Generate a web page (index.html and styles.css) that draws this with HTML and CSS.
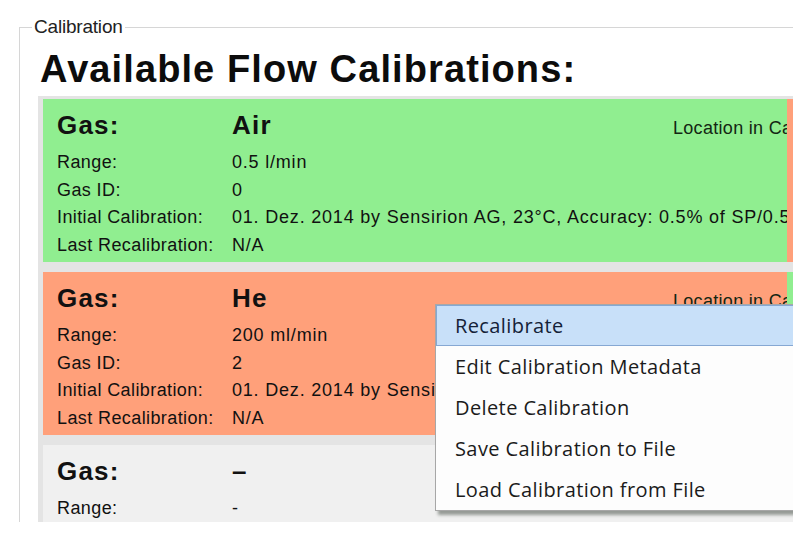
FILE: index.html
```html
<!DOCTYPE html>
<html>
<head>
<meta charset="utf-8">
<link rel="stylesheet" href="styles.css">
</head>
<body>
<div class="viewport">
  <fieldset class="group">
    <legend class="legend">Calibration</legend>
    <div class="content">
      <h1 class="title">Available Flow Calibrations:</h1>
      <div class="panel">
        <div class="row">
          <div class="card green">
            <div class="grid">
              <div class="hd">Gas:</div><div class="hd">Air</div><div class="loc">Location in Calibration Memory: 0</div>
              <div class="lb">Range:</div><div class="vl">0.5 l/min</div>
              <div class="lb">Gas ID:</div><div class="vl">0</div>
              <div class="lb">Initial Calibration:</div><div class="vl">01. Dez. 2014 by Sensirion AG, 23°C, Accuracy: 0.5% of SP/0.5% of FS</div>
              <div class="lb">Last Recalibration:</div><div class="vl">N/A</div>
            </div>
          </div>
          <div class="card salmon"></div>
        </div>
        <div class="row">
          <div class="card salmon">
            <div class="grid">
              <div class="hd">Gas:</div><div class="hd">He</div><div class="loc">Location in Calibration Memory: 1</div>
              <div class="lb">Range:</div><div class="vl">200 ml/min</div>
              <div class="lb">Gas ID:</div><div class="vl">2</div>
              <div class="lb">Initial Calibration:</div><div class="vl">01. Dez. 2014 by Sensirion AG, 23°C, Accuracy: 0.5% of SP/0.5% of FS</div>
              <div class="lb">Last Recalibration:</div><div class="vl">N/A</div>
            </div>
          </div>
          <div class="card green"></div>
        </div>
        <div class="row">
          <div class="card gray">
            <div class="grid">
              <div class="hd">Gas:</div><div class="hd">–</div><div class="loc">Location in Calibration Memory: 2</div>
              <div class="lb">Range:</div><div class="vl">-</div>
              <div class="lb">Gas ID:</div><div class="vl">-</div>
              <div class="lb">Initial Calibration:</div><div class="vl">-</div>
              <div class="lb">Last Recalibration:</div><div class="vl">-</div>
            </div>
          </div>
          <div class="card gray"></div>
        </div>
      </div>
    </div>
  </fieldset>
  <ul class="menu">
    <li class="item active">Recalibrate</li>
    <li class="item">Edit Calibration Metadata</li>
    <li class="item">Delete Calibration</li>
    <li class="item">Save Calibration to File</li>
    <li class="item">Load Calibration from File</li>
  </ul>
</div>
</body>
</html>
```
FILE: styles.css
```css
html, body {
  margin: 0;
  padding: 0;
  background: #ffffff;
}
body {
  font-family: "Liberation Sans", Arial, sans-serif;
  color: #111;
}
.viewport {
  position: relative;
  width: 793px;
  height: 522px;
  overflow: hidden;
  background: #ffffff;
}
.group {
  margin: 16px 0 0 19px;
  padding: 0 0 0 12px;
  border: 1px solid #d6d6d6;
  border-right: none;
  border-bottom: none;
  min-width: 0;
  height: 600px;
  box-sizing: border-box;
}
.legend {
  padding: 0 2px;
  font-size: 19px;
  line-height: 22px;
  color: #222;
  letter-spacing: -0.2px;
}
.content {
  margin-left: 6px;
}
.title {
  margin: 9px 0 0 2px;
  font-size: 38px;
  line-height: 44px;
  font-weight: bold;
  letter-spacing: 1.1px;
  color: #0c0c0c;
}
.panel {
  margin-top: 5px;
  width: 755px;
  background: #e4e4e4;
  padding: 3px 0 20px 5px;
  display: flex;
  flex-direction: column;
  gap: 10px;
  overflow: hidden;
}
.row {
  display: flex;
}
.card {
  flex: 0 0 744px;
  box-sizing: border-box;
  padding: 6px 14px;
  overflow: hidden;
  height: 163px;
}
.green { background: #90ee90; }
.salmon { background: #ffa07a; }
.gray { background: #f0f0f0; }
.grid {
  display: grid;
  grid-template-columns: 175px 441px max-content;
  align-items: baseline;
}
.hd {
  font-size: 26px;
  font-weight: bold;
  line-height: 41px;
  letter-spacing: 1.2px;
}
.loc {
  font-size: 18px;
  line-height: 41px;
  white-space: nowrap;
  color: #132613;
  letter-spacing: 0.3px;
}
.lb, .vl {
  font-size: 18px;
  line-height: 27.5px;
  white-space: nowrap;
}
.lb {
  letter-spacing: 0.4px;
}
.vl {
  grid-column: 2 / -1;
  letter-spacing: 0.8px;
}
.menu {
  position: absolute;
  left: 435px;
  top: 304px;
  width: 400px;
  margin: 0;
  padding: 0;
  list-style: none;
  background: #fdfdfd;
  border: 1px solid #a7a7a7;
  box-shadow: 3px 4px 3px rgba(40, 50, 40, 0.45);
  font-family: "Open Sans", "Noto Sans", sans-serif;
}
.item {
  box-sizing: border-box;
  height: 41px;
  line-height: 39px;
  padding-left: 18px;
  font-size: 20px;
  letter-spacing: 0.4px;
  color: #1b1b1b;
  border: 1px solid transparent;
}
.item.active {
  background: #c8e0f9;
  border-color: #86a8d3;
  color: #142238;
}
```
